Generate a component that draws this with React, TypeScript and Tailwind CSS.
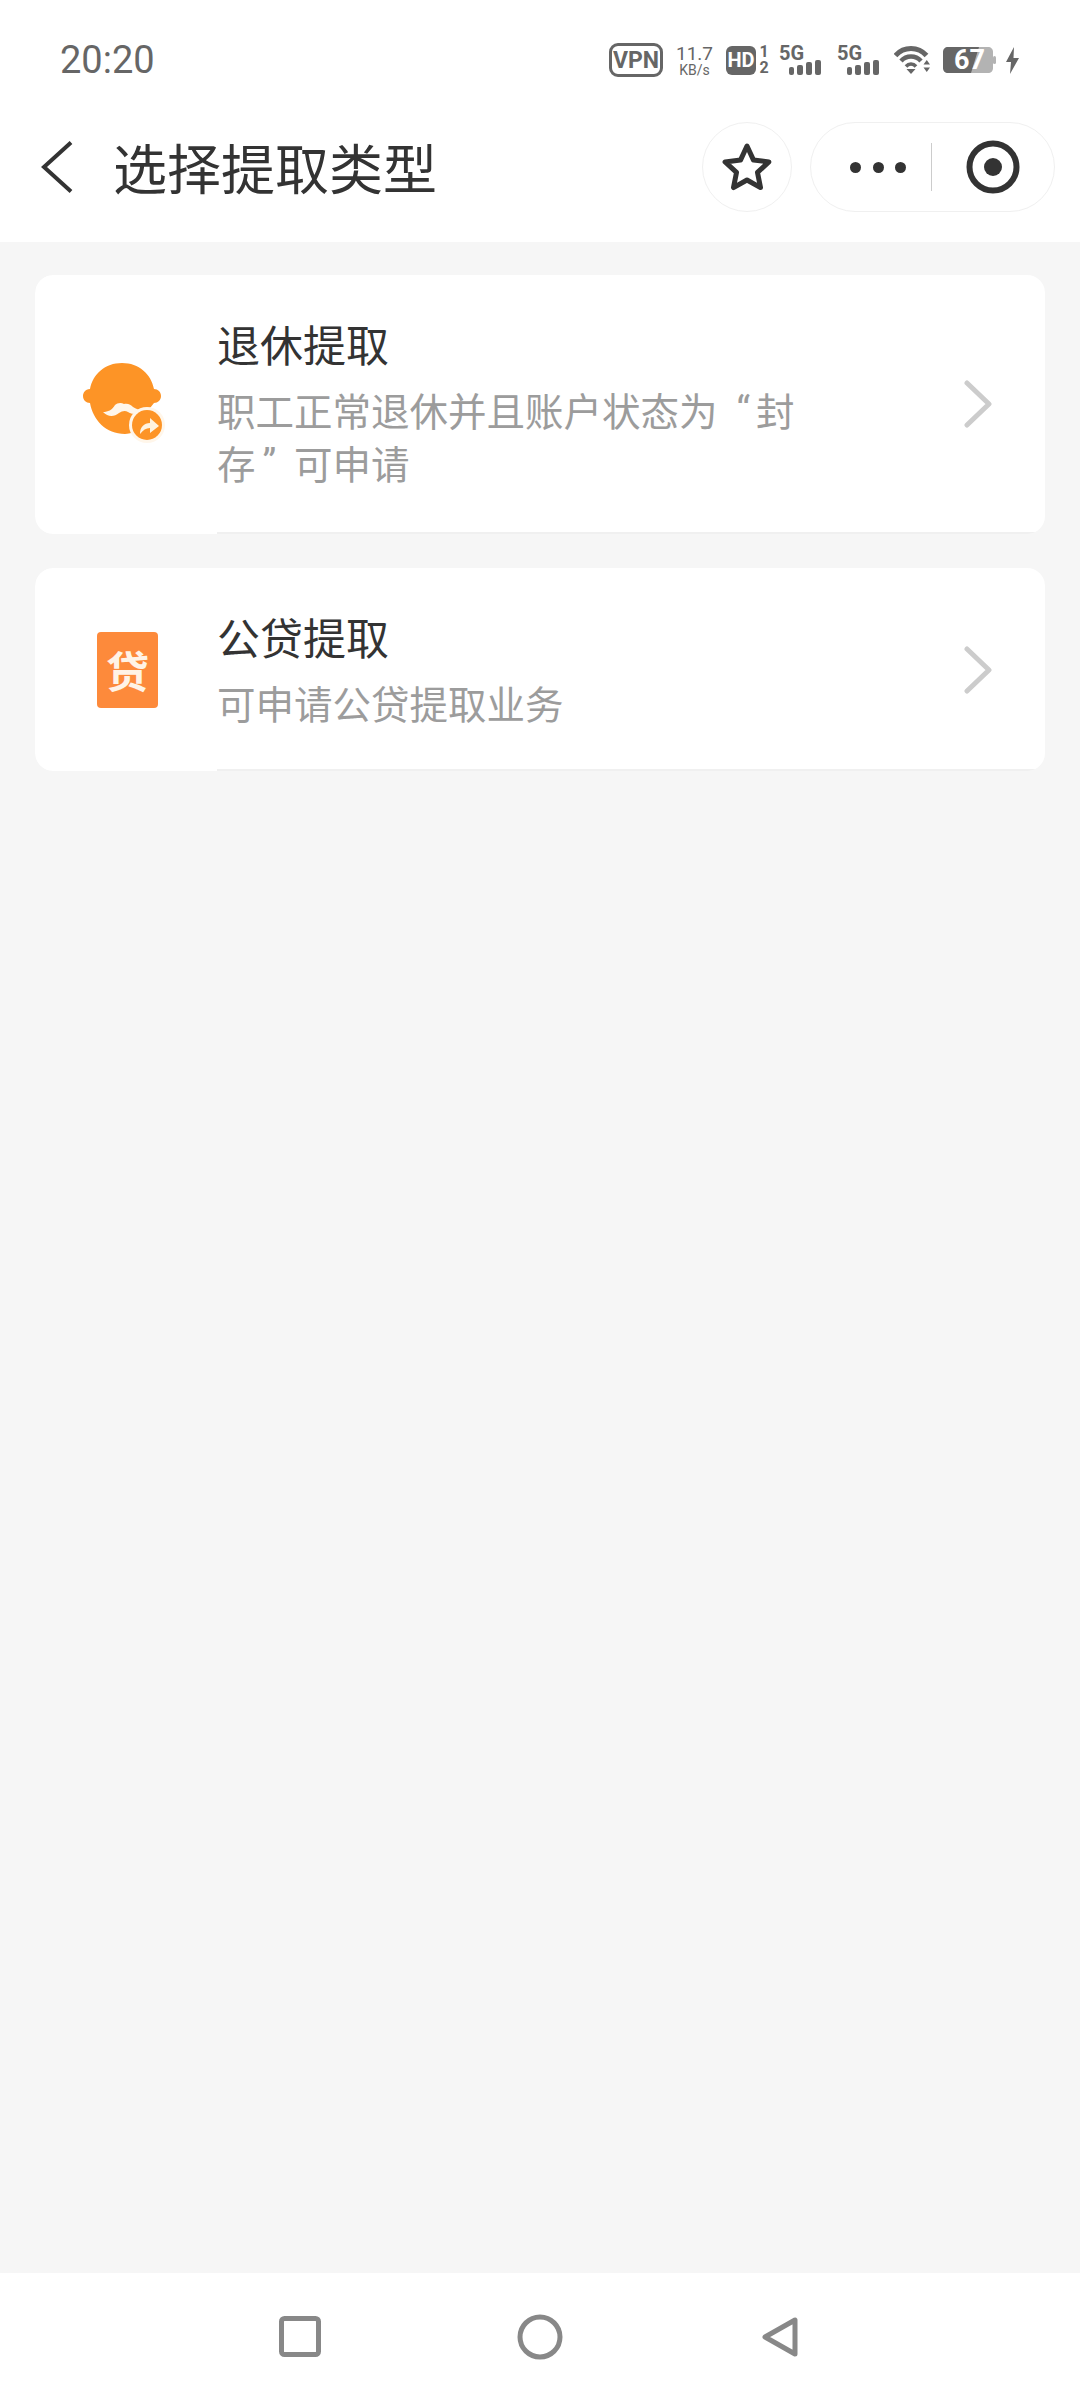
import { type ReactNode } from "react";

const cardItems = [
  {
    title: "退休提取",
    desc: (
      <>
        职工正常退休并且账户状态为
        <span className="inline-block align-top w-[38.500px] h-[53px] pr-[6px] text-right font-['Roboto',sans-serif]">“</span>
        封
        <br />
        存
        <span className="inline-block align-top w-[38.500px] h-[53px] pl-[7px] text-left font-['Roboto',sans-serif]">”</span>
        可申请
      </>
    ),
    iconClass: "pl-[35px]",
    bodyClass: "pb-[43px]",
    icon: <RetireIcon />,
  },
  {
    title: "公贷提取",
    desc: "可申请公贷提取业务",
    iconClass: "pl-[62px]",
    bodyClass: "pb-[40px]",
    icon: (
      <div className="w-[61px] h-[76px] rounded-[4px] bg-[#fd8a3b] flex items-center justify-center text-[43px] leading-none font-bold text-[#fff3e6]">
        贷
      </div>
    ),
  },
];

function RetireIcon() {
  return (
    <svg width="110" height="110" viewBox="0 4 110 110">
      <path
        d="M52 17C35 17 23 28 20 43c-5 0-7 4-7 7 0 4 3 7 7 7 3 17 16 31 35 31 3 0 5-1 6-1L80 62l4-5c4 0 7-3 7-7 0-4-3-7-7-7-3-15-15-26-32-26z"
        fill="#fd9426"
      />
      <path
        d="M33 66c5 0 9-2 12-7 2-2 6-3 9-1 4-1 7 1 9 3 3 2 6 3 9 3-4 4-10 5-14 2-3-2-6-1-9 1-5 4-11 4-16-1z"
        fill="#fff6ea"
      />
      <circle cx="77" cy="79" r="18" fill="#fff6ea" />
      <circle cx="77" cy="79" r="15" fill="#fd9426" />
      <path d="M70 88c0-7 4-11 10-11v-5l9 8-9 7v-5c-4 0-7 2-10 6z" fill="#fff3e0" />
    </svg>
  );
}

function Bars() {
  return (
    <div className="absolute left-[10px] bottom-0 flex items-end gap-[3px]">
      <i className="block w-[5px] h-[8px] rounded-[2px] bg-[#666]" />
      <i className="block w-[6px] h-[10px] rounded-[2px] bg-[#666]" />
      <i className="block w-[6px] h-[13px] rounded-[2px] bg-[#666]" />
      <i className="block w-[6px] h-[15px] rounded-[2px] bg-[#666]" />
    </div>
  );
}

function Signal({ className }: { className: string }) {
  return (
    <div className={`relative w-[44px] h-[29px] ${className}`}>
      <span className="absolute left-0 top-[-3px] text-[20px] leading-[20px] font-bold text-[#666]">5G</span>
      <Bars />
    </div>
  );
}

function StatusBar() {
  return (
    <div className="h-[120px] flex items-center pl-[60px] pr-[61px] text-[#666] font-['Roboto',sans-serif]">
      <span className="text-[38px] leading-none">20:20</span>
      <div className="ml-auto flex items-center">
        <div className="w-[54px] h-[34px] rounded-[9px] border-[3.500px] border-[#666] flex items-center justify-center text-[23px] leading-none font-bold">
          VPN
        </div>
        <div className="ml-[15px] w-[33px] flex flex-col items-center">
          <span className="text-[19px] leading-[19px]">11.7</span>
          <span className="text-[14px] leading-[14px] whitespace-nowrap">KB/s</span>
        </div>
        <div className="ml-[15px] flex items-center">
          <div className="w-[30px] h-[29px] rounded-[6px] bg-[#666] flex items-center justify-center text-white text-[20px] leading-none font-bold">
            HD
          </div>
          <div className="ml-[3px] w-[10px] flex flex-col items-center text-[16px] leading-[16px] font-bold">
            <span>1</span>
            <span>2</span>
          </div>
        </div>
        <Signal className="ml-[10px]" />
        <Signal className="ml-[14px]" />
        <svg className="ml-[13px]" width="36" height="28" viewBox="0 0 36 28" fill="none">
          <path d="M1.500 9.500C5.500 5 11 2.500 17 2.500s11.500 2.500 15.500 7" stroke="#666" strokeWidth="5" />
          <path d="M7 15c2.500-2.800 6-4.500 10-4.500s7.500 1.700 10 4.500" stroke="#666" strokeWidth="4.500" />
          <path d="M12 20.500c1.200-1.400 3-2.400 5-2.400s3.800 1 5 2.400" stroke="#666" strokeWidth="3.500" />
          <path d="M12.500 23h9L17 28z" fill="#666" />
          <path d="M29.500 18.500l3.250-4.500 3.250 4.500zM29.500 21.500H36l-3.250 4.500z" fill="#666" />
        </svg>
        <div className="ml-[13px] relative w-[53px] h-[26px]">
          <svg className="block" width="53" height="26" viewBox="0 0 53 26">
            <path d="M34 0h11c3 0 5 2 5 5v16c0 3-2 5-5 5H26z" fill="#b3b3b3" />
            <path d="M5 0h31l-8 26H5c-3 0-5-2-5-5V5c0-3 2-5 5-5z" fill="#666" />
            <rect x="50" y="9" width="3" height="8" rx="1.500" fill="#b3b3b3" />
          </svg>
          <span className="absolute left-[11px] top-0 text-[27px] leading-[26px] font-bold text-white">67</span>
        </div>
        <svg className="ml-[10px]" width="13" height="27" viewBox="0 0 13 27">
          <path d="M8 0L0 15h5l-1 12 9-16H7.500z" fill="#666" />
        </svg>
      </div>
    </div>
  );
}

function NavBar() {
  return (
    <div className="h-[94px] mb-[28px] flex items-center pl-[39px] pr-[25px]">
      <svg width="36" height="56" viewBox="0 0 36 56" fill="none">
        <path d="M32 3.500L5 28l27 24.500" stroke="#333" strokeWidth="4" />
      </svg>
      <h1 className="ml-[38px] text-[54px] leading-none font-normal text-[#333]">选择提取类型</h1>
      <div className="ml-auto flex items-center gap-[18px]">
        <button className="w-[90px] h-[90px] rounded-full border border-[#f0f0f0] flex items-center justify-center">
          <svg width="50" height="50" viewBox="0 0 50 50" fill="none">
            <path
              d="M25 4l6.500 14.100 15.400 1.800-11.400 10.500 3 15.200L25 38l-13.500 7.600 3-15.200L3.100 19.900l15.400-1.800z"
              stroke="#333"
              strokeWidth="5"
              strokeLinejoin="round"
            />
          </svg>
        </button>
        <div className="w-[245px] h-[90px] rounded-full border border-[#f0f0f0] flex items-center pl-[39px]">
          <div className="flex items-center gap-[11.500px]">
            <i className="block w-[11px] h-[11px] rounded-full bg-[#333]" />
            <i className="block w-[11px] h-[11px] rounded-full bg-[#333]" />
            <i className="block w-[11px] h-[11px] rounded-full bg-[#333]" />
          </div>
          <div className="ml-[25px] w-px h-[48px] bg-[#ccc]" />
          <svg className="ml-[31px]" width="60" height="60" viewBox="0 0 60 60" fill="none">
            <circle cx="30" cy="30" r="23.500" stroke="#333" strokeWidth="6" />
            <circle cx="30" cy="30" r="9" fill="#333" />
          </svg>
        </div>
      </div>
    </div>
  );
}

function Card({
  title,
  desc,
  icon,
  iconClass,
  bodyClass,
}: {
  title: string;
  desc: ReactNode;
  icon: ReactNode;
  iconClass: string;
  bodyClass: string;
}) {
  return (
    <div className="flex rounded-[18px] overflow-hidden bg-[#f6f6f6]">
      <div className={`w-[182px] shrink-0 rounded-l-[18px] bg-white flex items-center ${iconClass}`}>{icon}</div>
      <div className={`flex-1 bg-white border-b-2 border-[#f0f0f0] flex items-center justify-between pr-[53px] pt-[38px] ${bodyClass}`}>
        <div className="w-[590px]">
          <div className="text-[43px] leading-[60px] text-[#333]">{title}</div>
          <div className="mt-[10px] text-[38.500px] leading-[53px] text-[#9c9c9c]">{desc}</div>
        </div>
        <svg className="mt-[5px]" width="28" height="48" viewBox="0 0 28 48" fill="none">
          <path d="M3 3l22 21L3 45" stroke="#ccc" strokeWidth="5" strokeLinecap="round" strokeLinejoin="round" />
        </svg>
      </div>
    </div>
  );
}

function BottomNav() {
  return (
    <div className="h-[127px] bg-white flex items-center pl-[279px]">
      <svg width="42" height="41" viewBox="0 0 42 41" fill="none">
        <rect x="2.500" y="2.500" width="37" height="36" rx="3" stroke="#888" strokeWidth="5" />
      </svg>
      <svg className="ml-[196px]" width="46" height="46" viewBox="0 0 46 46" fill="none">
        <circle cx="23" cy="23" r="20" stroke="#888" strokeWidth="5" />
      </svg>
      <svg className="ml-[198px]" width="38" height="42" viewBox="0 0 38 42" fill="none">
        <path d="M34 4v34L4 21z" stroke="#888" strokeWidth="5" strokeLinejoin="round" />
      </svg>
    </div>
  );
}

export default function App() {
  return (
    <div lang="zh-CN" className="w-[1080px] h-[2400px] flex flex-col bg-[#f6f6f6] font-['Noto_Sans_CJK_SC',sans-serif]">
      <header className="bg-white">
        <StatusBar />
        <NavBar />
      </header>
      <main className="flex-1 px-[35px] pt-[33px] flex flex-col gap-[34px]">
        {cardItems.map((item, index) => (
          <Card key={index} {...item} />
        ))}
      </main>
      <BottomNav />
    </div>
  );
}
